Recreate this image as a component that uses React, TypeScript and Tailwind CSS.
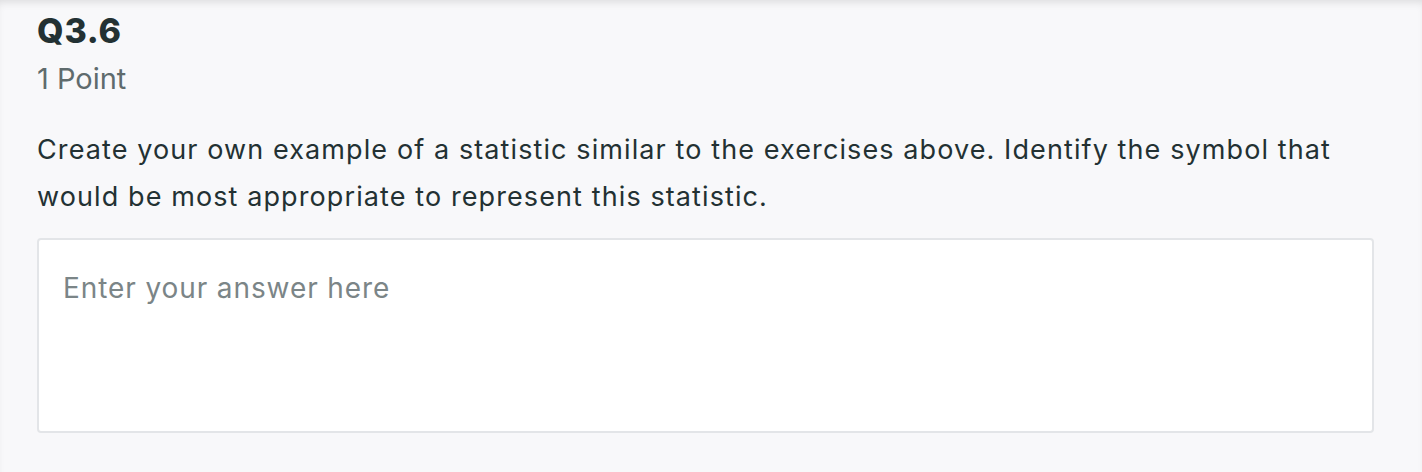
import React from "react";

function Question() {
  return (
    <div className="min-h-[472px] w-full bg-[#f8f8fa] font-['Inter','Liberation_Sans',sans-serif] text-[#233133] shadow-[inset_0_6px_8px_-4px_rgba(0,0,0,0.12)]">
      <div className="pl-[37px] pr-[48px] pt-[11px]">
        <h2 className="text-[34px] font-extrabold leading-[40px] tracking-[0.8px]">Q3.6</h2>
        <div className="mt-[10px] text-[29px] leading-[36px] text-[#5f6b6d]">1 Point</div>
        <p className="mt-[29px] text-[27px] leading-[47px] tracking-[1.1px]">
          Create your own example of a statistic similar to the exercises above. Identify the symbol that would be most appropriate to represent this statistic.
        </p>
        <textarea
          placeholder="Enter your answer here"
          className="mt-[18px] block h-[195px] w-full resize-none rounded-[4px] border-2 border-[#e3e5e8] bg-white px-[24px] py-[29px] text-[28px] leading-[38px] tracking-[0.9px] placeholder:text-[#7b8587] focus:outline-none"
        />
      </div>
    </div>
  );
}

export default function App() {
  return <Question />;
}
